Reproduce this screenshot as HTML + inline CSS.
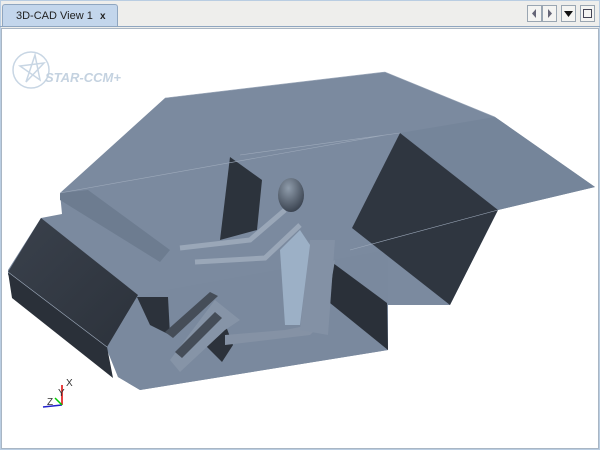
<!DOCTYPE html>
<html><head><style>
body{margin:0;width:600px;height:450px;overflow:hidden;background:#eeeeec;font-family:"Liberation Sans",sans-serif;position:relative}
.outer{position:absolute;left:0;top:0;width:598px;height:448px;border:1px solid #b9cde2;}
.tab{position:absolute;left:2px;top:4px;width:114px;height:22px;background:#c3d6ec;border:1px solid #8fa6c0;border-bottom:none;border-radius:3px 3px 0 0;font-size:11px;color:#222}
.tab span{position:absolute;left:13px;top:5px}
.tab b{position:absolute;left:97px;top:6px;font-size:10px}
.line{position:absolute;left:0;top:26px;width:600px;height:1px;background:#8fa6c0}
.view{position:absolute;left:1px;top:28px;width:596px;height:419px;background:#fff;border:1px solid #a9b6c4}
.btn{position:absolute;top:5px;width:13px;height:15px;border:1px solid #9aa6b2;background:#f4f4f2}
</style></head><body>
<div class="outer"></div>
<div class="tab"><span>3D-CAD View 1</span><b>x</b></div>
<div class="line"></div>
<div class="btn" style="left:527px"><svg width="13" height="15"><polygon points="8,3 8,12 4,7.5" fill="#667"/></svg></div>
<div class="btn" style="left:542px"><svg width="13" height="15"><polygon points="5,3 5,12 9,7.5" fill="#667"/></svg></div>
<div class="btn" style="left:561px"><svg width="13" height="15"><polygon points="2,5 11,5 6.5,11" fill="#111"/></svg></div>
<div class="btn" style="left:580px"><svg width="13" height="15"><rect x="2.5" y="3.5" width="8" height="8" fill="none" stroke="#445"/></svg></div>
<div class="view"></div>
<svg width="600" height="450" style="position:absolute;left:0;top:0">
<defs>
<radialGradient id="hd" cx="0.4" cy="0.3" r="0.7"><stop offset="0" stop-color="#8f9cab"/><stop offset="1" stop-color="#3c4552"/></radialGradient>
<linearGradient id="lb" x1="0" y1="0" x2="1" y2="1"><stop offset="0" stop-color="#3a414c"/><stop offset="1" stop-color="#2c323b"/></linearGradient>
</defs>
<g fill="none" stroke="#c8d6e4" stroke-width="1.5">
<circle cx="31" cy="70" r="18"/>
<polygon points="35,55 40,80 20,66 44,63 26,82"/>
</g>
<text x="45" y="82" font-size="13" font-weight="bold" font-style="italic" fill="#c4d2e0">STAR-CCM+</text>
<polygon points="8,270 41,218 62,214 60,193 165,98 385,72 495,117 595,187 498,210 450,305 388,305 388,350 140,390 118,377 107,350 8,275" fill="#7b8a9f"/>
<polygon points="495,117 595,187 498,210 400,133" fill="#75859a"/>
<polygon points="107,347 140,295 388,250 388,350 140,390 118,377" fill="#7a899e"/>
<polygon points="41,218 138,295 107,347 8,272" fill="url(#lb)"/>
<polygon points="8,272 107,347 113,378 12,298" fill="#2a3039"/>
<polygon points="400,133 498,210 450,305 352,228" fill="#2f3640"/>
<polygon points="230,157 262,180 257,230 220,240" fill="#2c333c"/>
<polygon points="333,263 387,303 388,350 330,303" fill="#2a3039"/>
<polygon points="137,297 168,297 170,335 150,325" fill="#2c323b"/>
<polygon points="195,335 223,318 233,345 222,362" fill="#2c323b"/>
<polygon points="60,193 88,190 170,250 160,262 60,200" fill="#6d7c90"/>
<polygon points="170,360 215,300 240,320 225,330 180,372" fill="#8694a7"/>
<polygon points="165,332 210,292 218,296 173,338" fill="#454d58"/>
<polygon points="175,352 215,312 222,318 182,358" fill="#454d58"/>
<polygon points="225,335 285,330 310,325 320,270 335,260 325,320 310,335 225,345" fill="#8592a5"/>
<polygon points="310,240 335,240 328,335 300,330" fill="#8391a5"/>
<polygon points="280,250 300,230 310,245 300,325 285,325" fill="#9cb0c6"/>
<path d="M180,248 L250,240 L285,210 M195,262 L265,258 L300,225" stroke="#9aa7b8" stroke-width="5" fill="none"/>
<ellipse cx="291" cy="195" rx="13" ry="17" fill="url(#hd)"/>
<path d="M165,98 L385,72 L495,117 M60,193 L385,135 M240,155 L400,133 M350,250 L498,210 M8,272 L107,347" stroke="#9eaabb" stroke-width="0.6" fill="none"/>
<g stroke-width="1.5">
<line x1="62" y1="405" x2="62" y2="385" stroke="#d00"/>
<line x1="62" y1="405" x2="43" y2="407" stroke="#22c"/>
<line x1="62" y1="405" x2="55" y2="398" stroke="#0c0"/>
</g>
<text x="66" y="386" font-size="10" fill="#333">X</text>
<text x="58" y="396" font-size="10" fill="#333">Y</text>
<text x="47" y="405" font-size="10" fill="#333">Z</text>
</svg>
</body></html>
